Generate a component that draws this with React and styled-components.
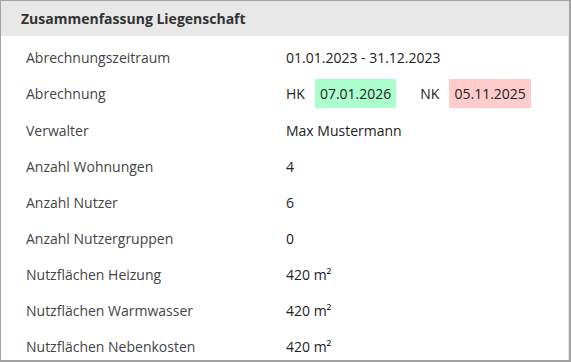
import React from "react";
import styled, { createGlobalStyle } from "styled-components";

const GlobalStyle = createGlobalStyle`
  html, body {
    margin: 0;
    padding: 0;
    background: #fff;
  }
  body {
    font-family: "Open Sans", "DejaVu Sans", sans-serif;
  }
`;

const rows = [
  { label: "Abrechnungszeitraum", value: "01.01.2023 - 31.12.2023" },
  { label: "Abrechnung", dates: true },
  { label: "Verwalter", value: "Max Mustermann" },
  { label: "Anzahl Wohnungen", value: "4" },
  { label: "Anzahl Nutzer", value: "6" },
  { label: "Anzahl Nutzergruppen", value: "0" },
  { label: "Nutzflächen Heizung", value: "420 m²" },
  { label: "Nutzflächen Warmwasser", value: "420 m²" },
  { label: "Nutzflächen Nebenkosten", value: "420 m²" },
];

const App = () => {
  return (
    <>
      <GlobalStyle />
      <Card>
        <Header>Zusammenfassung Liegenschaft</Header>
        <Body>
          {rows.map((row) => (
            <Row key={row.label} tall={row.dates}>
              <Label>{row.label}</Label>
              {row.dates ? (
                <Dates>
                  <Tag>HK</Tag>
                  <Badge tone="green">07.01.2026</Badge>
                  <Tag>NK</Tag>
                  <Badge tone="red">05.11.2025</Badge>
                </Dates>
              ) : (
                <Value>{row.value}</Value>
              )}
            </Row>
          ))}
        </Body>
      </Card>
    </>
  );
};

const Card = styled.div`
  box-sizing: border-box;
  width: 571px;
  height: 362px;
  border: 1px solid #a3a3a3;
  border-right-width: 2px;
  border-bottom-width: 2px;
  overflow: hidden;
  background: #fff;
`;

const Header = styled.div`
  height: 35px;
  display: flex;
  align-items: center;
  padding-left: 20px;
  background: #e8e8e8;
  color: #333;
  font-size: 14px;
  font-weight: 700;
`;

const Body = styled.div`
  padding-top: 3px;
  border-right: 1px solid #e6e6e6;
`;

const Row = styled.div`
  display: grid;
  grid-template-columns: 260px 1fr;
  align-items: center;
  height: ${(p) => (p.tall ? "37px" : "36px")};
  padding-left: 25px;
  font-size: 14px;
`;

const Label = styled.div`
  color: #444;
`;

const Value = styled.div`
  color: #222;
`;

const Dates = styled.div`
  display: flex;
  align-items: center;
  color: #222;
`;

const Tag = styled.span`
  margin-right: 10px;
  & ~ & {
    margin-left: 24px;
  }
`;

const Badge = styled.span`
  display: inline-block;
  padding: 5px 5px;
  line-height: 19px;
  background: ${(p) => (p.tone === "green" ? "#aaffcc" : "#ffcccc")};
  color: #222;
`;

export default App;
